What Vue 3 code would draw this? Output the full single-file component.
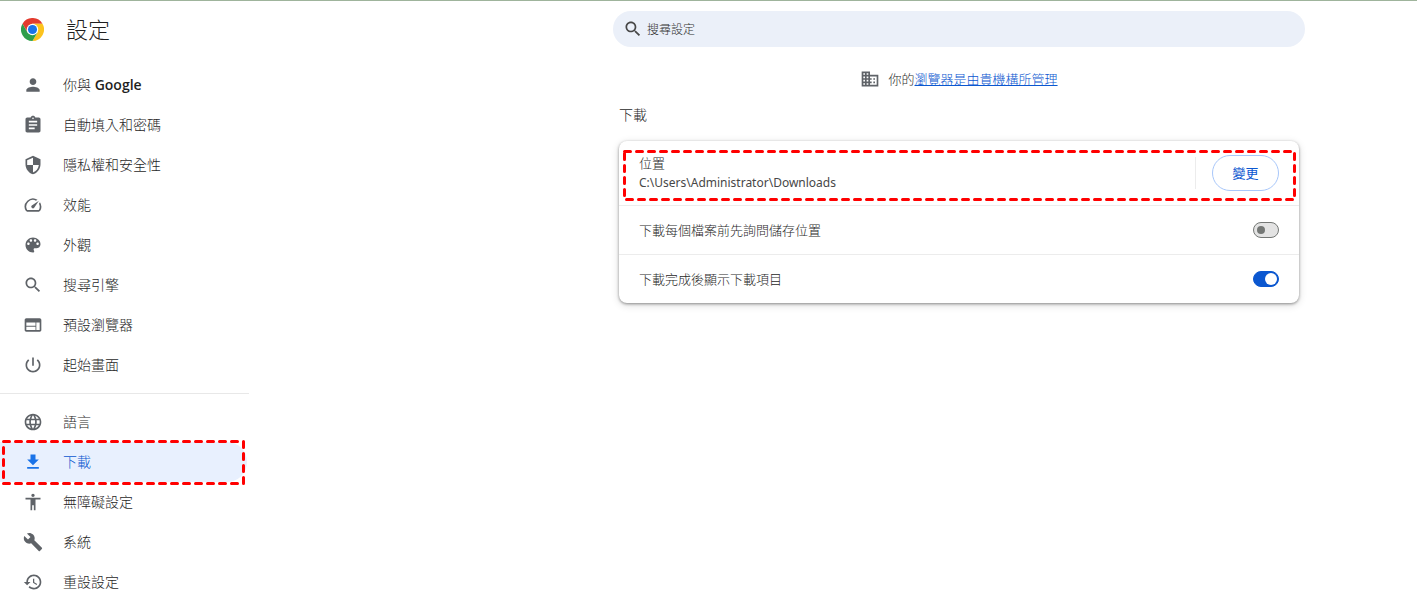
<script setup>
import { ref } from 'vue'

const searchPath = 'M15.5 14h-.79l-.28-.27C15.41 12.59 16 11.11 16 9.5 16 5.91 13.09 3 9.5 3S3 5.91 3 9.5 5.91 16 9.5 16c1.61 0 3.09-.59 4.23-1.57l.27.28v.79l5 4.99L20.49 19l-4.99-5zm-6 0C7.01 14 5 11.99 5 9.5S7.01 5 9.5 5 14 7.01 14 9.5 11.99 14 9.5 14z'
const domainPath = 'M12 7V3H2v18h20V7H12zM6 19H4v-2h2v2zm0-4H4v-2h2v2zm0-4H4V9h2v2zm0-4H4V5h2v2zm4 12H8v-2h2v2zm0-4H8v-2h2v2zm0-4H8V9h2v2zm0-4H8V5h2v2zm10 12h-8v-2h2v-2h-2v-2h2v-2h-2V9h8v10zm-2-8h-2v2h2v-2zm0 4h-2v2h2v-2z'

const groups = [
  [
    { id: 'people', label: '你與', strong: 'Google', icon: 'M12 12c2.21 0 4-1.79 4-4s-1.79-4-4-4-4 1.79-4 4 1.79 4 4 4zm0 2c-2.67 0-8 1.34-8 4v2h16v-2c0-2.66-5.33-4-8-4z' },
    { id: 'autofill', label: '自動填入和密碼', icon: 'M19 3h-4.18C14.4 1.84 13.3 1 12 1c-1.3 0-2.4.84-2.82 2H5c-1.1 0-2 .9-2 2v14c0 1.1.9 2 2 2h14c1.1 0 2-.9 2-2V5c0-1.1-.9-2-2-2zm-7 0c.55 0 1 .45 1 1s-.45 1-1 1-1-.45-1-1 .45-1 1-1zm2 14H7v-2h7v2zm3-4H7v-2h10v2zm0-4H7V7h10v2z' },
    { id: 'privacy', label: '隱私權和安全性', icon: 'M12 1L3 5v6c0 5.55 3.84 10.74 9 12 5.16-1.26 9-6.45 9-12V5l-9-4zm0 10.99h7c-.53 4.12-3.28 7.79-7 8.94V12H5V6.3l7-3.11v8.8z' },
    { id: 'performance', label: '效能', icon: 'M20.38 8.57l-1.23 1.85a8 8 0 0 1-.22 7.58H5.07A8 8 0 0 1 15.58 6.85l1.85-1.23A10 10 0 0 0 3.35 19a2 2 0 0 0 1.72 1h13.85a2 2 0 0 0 1.74-1 10 10 0 0 0-.27-10.44zm-9.79 6.84a2 2 0 0 0 2.83 0l5.66-8.49-8.49 5.66a2 2 0 0 0 0 2.83z' },
    { id: 'appearance', label: '外觀', icon: 'M12 3c-4.97 0-9 4.03-9 9s4.03 9 9 9c.83 0 1.5-.67 1.5-1.5 0-.39-.15-.74-.39-1.01-.23-.26-.38-.61-.38-.99 0-.83.67-1.5 1.5-1.5H16c2.76 0 5-2.24 5-5 0-4.42-4.03-8-9-8zm-5.5 9c-.83 0-1.5-.67-1.5-1.5S5.67 9 6.5 9 8 9.67 8 10.5 7.33 12 6.5 12zm3-4C8.67 8 8 7.33 8 6.5S8.67 5 9.5 5s1.5.67 1.5 1.5S10.33 8 9.5 8zm5 0c-.83 0-1.5-.67-1.5-1.5S13.67 5 14.5 5s1.5.67 1.5 1.5S15.33 8 14.5 8zm3 4c-.83 0-1.5-.67-1.5-1.5S16.67 9 17.5 9s1.5.67 1.5 1.5-.67 1.5-1.5 1.5z' },
    { id: 'search', label: '搜尋引擎', icon: searchPath },
    { id: 'default-browser', label: '預設瀏覽器', icon: 'M20 4H4c-1.1 0-1.99.9-1.99 2L2 18c0 1.1.9 2 2 2h16c1.1 0 2-.9 2-2V6c0-1.1-.9-2-2-2zm-5 14H4v-4h11v4zm0-5H4V9h11v4zm5 5h-4V9h4v9z' },
    { id: 'on-startup', label: '起始畫面', icon: 'M13 3h-2v10h2V3zm4.83 2.17l-1.42 1.42C17.99 7.86 19 9.81 19 12c0 3.87-3.13 7-7 7s-7-3.13-7-7c0-2.19 1.01-4.14 2.58-5.42L6.17 5.17C4.23 6.82 3 9.26 3 12c0 4.97 4.03 9 9 9s9-4.03 9-9c0-2.74-1.23-5.18-3.17-6.83z' }
  ],
  [
    { id: 'languages', label: '語言', icon: 'M11.99 2C6.47 2 2 6.48 2 12s4.47 10 9.99 10C17.52 22 22 17.52 22 12S17.52 2 11.99 2zm6.93 6h-2.95c-.32-1.25-.78-2.45-1.38-3.56 1.84.63 3.37 1.91 4.33 3.56zM12 4.04c.83 1.2 1.48 2.53 1.91 3.96h-3.82c.43-1.43 1.08-2.76 1.91-3.96zM4.26 14C4.1 13.36 4 12.69 4 12s.1-1.36.26-2h3.38c-.08.66-.14 1.32-.14 2 0 .68.06 1.34.14 2H4.26zm.82 2h2.95c.32 1.25.78 2.45 1.38 3.56-1.84-.63-3.37-1.9-4.33-3.56zm2.95-8H5.08c.96-1.66 2.49-2.93 4.33-3.56C8.81 5.55 8.35 6.75 8.03 8zM12 19.96c-.83-1.2-1.48-2.53-1.91-3.96h3.82c-.43 1.43-1.08 2.76-1.91 3.96zM14.34 14H9.66c-.09-.66-.16-1.32-.16-2 0-.68.07-1.35.16-2h4.68c.09.65.16 1.32.16 2 0 .68-.07 1.34-.16 2zm.25 5.56c.6-1.11 1.06-2.31 1.38-3.56h2.95c-.96 1.65-2.49 2.93-4.33 3.56zM16.36 14c.08-.66.14-1.32.14-2 0-.68-.06-1.34-.14-2h3.38c.16.64.26 1.31.26 2s-.1 1.36-.26 2h-3.38z' },
    { id: 'downloads', label: '下載', icon: 'M19 9h-4V3H9v6H5l7 7 7-7zM5 18v2h14v-2H5z' },
    { id: 'accessibility', label: '無障礙設定', icon: 'M12 2c1.1 0 2 .9 2 2s-.9 2-2 2-2-.9-2-2 .9-2 2-2zm9 7h-6v13h-2v-6h-2v6H9V9H3V7h18v2z' },
    { id: 'system', label: '系統', icon: 'M22.7 19l-9.1-9.1c.9-2.3.4-5-1.5-6.9-2-2-5-2.4-7.4-1.3L9 6 6 9 1.6 4.7C.4 7.1.9 10.1 2.9 12.1c1.9 1.9 4.6 2.4 6.9 1.5l9.1 9.1c.4.4 1 .4 1.4 0l2.3-2.3c.5-.4.5-1.1.1-1.4z' },
    { id: 'reset', label: '重設設定', icon: 'M13 3c-4.97 0-9 4.03-9 9H1l3.89 3.89.07.14L9 12H6c0-3.87 3.13-7 7-7s7 3.13 7 7-3.13 7-7 7c-1.93 0-3.68-.79-4.94-2.06l-1.42 1.42C8.27 19.99 10.51 21 13 21c4.97 0 9-4.03 9-9s-4.03-9-9-9zm-1 5v5l4.28 2.54.72-1.21-3.5-2.08V8H12z' }
  ]
]

const current = ref('downloads')
const query = ref('')
const askLocation = ref(false)
const showWhenDone = ref(true)
</script>

<template>
  <div class="page">
    <aside class="sidebar">
      <header class="brand">
        <svg class="logo" viewBox="0 0 48 48" aria-hidden="true">
          <path fill="#e33b2e" d="M3.2 12A24 24 0 0 1 44.8 12H24L13.6 30z" />
          <path fill="#fcc31e" d="M44.8 12A24 24 0 0 1 24 48L34.4 30 24 12z" />
          <path fill="#2f9e4b" d="M24 48A24 24 0 0 1 3.2 12L13.6 30H34.4z" />
          <circle cx="24" cy="24" r="12" fill="#fff" />
          <circle cx="24" cy="24" r="9.5" fill="#1a73e8" />
        </svg>
        <h1>設定</h1>
      </header>
      <nav aria-label="設定">
        <ul v-for="(group, i) in groups" :key="i" class="group">
          <li v-for="item in group" :key="item.id">
            <a
              :href="'#' + item.id"
              class="item"
              :class="{ selected: current === item.id }"
              :aria-current="current === item.id ? 'page' : undefined"
              @click.prevent="current = item.id"
            >
              <svg class="icon" viewBox="0 0 24 24" aria-hidden="true"><path :d="item.icon" /></svg>
              <span>{{ item.label }}<b v-if="item.strong">&nbsp;{{ item.strong }}</b></span>
              <svg v-if="item.id === 'downloads'" class="marker" aria-hidden="true"><rect x="1.5" y="1.5" /></svg>
            </a>
          </li>
        </ul>
      </nav>
    </aside>

    <main class="main">
      <label class="search">
        <svg class="icon" viewBox="0 0 24 24" aria-hidden="true"><path :d="searchPath" /></svg>
        <input v-model="query" type="search" placeholder="搜尋設定" aria-label="搜尋設定" />
      </label>

      <div class="content">
        <p class="managed">
          <svg class="icon" viewBox="0 0 24 24" aria-hidden="true"><path :d="domainPath" /></svg>
          <span>你的<a href="#management">瀏覽器是由貴機構所管理</a></span>
        </p>

        <h2>下載</h2>
        <section class="card">
          <div class="row location">
            <div class="text">
              <div>位置</div>
              <div class="path">C:\Users\Administrator\Downloads</div>
            </div>
            <div class="action"><button type="button">變更</button></div>
            <svg class="marker" aria-hidden="true"><rect x="1.5" y="1.5" /></svg>
          </div>
          <label class="row">
            <span class="text">下載每個檔案前先詢問儲存位置</span>
            <input v-model="askLocation" class="switch" type="checkbox" role="switch" />
          </label>
          <label class="row">
            <span class="text">下載完成後顯示下載項目</span>
            <input v-model="showWhenDone" class="switch" type="checkbox" role="switch" />
          </label>
        </section>
      </div>
    </main>
  </div>
</template>

<style>
body {
  margin: 0;
  background: #fff;
}
</style>

<style scoped>
.page {
  box-sizing: border-box;
  min-height: 100vh;
  display: grid;
  grid-template-columns: 249px 13fr minmax(0, 692px) 4fr;
  border-top: 1px solid #9fb49c;
  color: #1f1f1f;
  font: 300 13px/20px "Open Sans", "Noto Sans CJK TC", sans-serif;
}

.icon {
  width: 20px;
  height: 20px;
  flex: none;
  fill: #5f6368;
}

.brand {
  display: flex;
  align-items: center;
  gap: 22px;
  height: 56px;
  padding-left: 21px;
}

.logo {
  width: 23px;
  height: 23px;
}

h1 {
  margin: 0;
  font-size: 22px;
  line-height: 32px;
  font-weight: 300;
}

.group {
  list-style: none;
  margin: 0;
  padding: 8px 0;
}

.group + .group {
  border-top: 1px solid #e8e8e8;
}

.item {
  position: relative;
  display: flex;
  align-items: center;
  gap: 20px;
  height: 40px;
  margin-right: 2px;
  padding-left: 23px;
  border-radius: 0 20px 20px 0;
  color: #1f1f1f;
  font-size: 14px;
  text-decoration: none;
}

.item b {
  font-weight: 600;
}

.item.selected {
  background: #e8f0fe;
  color: #0b57d0;
}

.item.selected .icon {
  fill: #1a73e8;
}

.marker {
  position: absolute;
  pointer-events: none;
}

.marker rect {
  width: calc(100% - 3px);
  height: calc(100% - 3px);
  fill: none;
  stroke: #f00;
  stroke-width: 3px;
  stroke-dasharray: 6 6;
  stroke-linecap: round;
  stroke-linejoin: round;
}

.item .marker {
  left: 2px;
  top: -2px;
  width: calc(100% - 4px);
  height: 45px;
}

.main {
  grid-column: 3;
  padding-top: 10px;
}

.search {
  display: flex;
  align-items: center;
  gap: 4px;
  height: 36px;
  padding: 0 20px 0 10px;
  border-radius: 18px;
  background: #ebf0f9;
}

.search .icon {
  fill: #474747;
}

.search input {
  flex: 1;
  min-width: 0;
  padding: 2px 0 0;
  border: 0;
  outline: 0;
  background: none;
  color: #1f1f1f;
  font: inherit;
  font-size: 12px;
}

.search input::placeholder {
  color: #303030;
  opacity: 1;
}

.content {
  padding: 0 6px;
}

.managed {
  display: flex;
  justify-content: center;
  align-items: center;
  gap: 8px;
  margin: 22px 0 16px;
  color: #303030;
}

.managed a {
  color: #0b57d0;
}

h2 {
  margin: 0 0 16px;
  font-size: 14px;
  line-height: 20px;
  font-weight: 300;
}

.card {
  border-radius: 8px;
  box-shadow: 0 1px 3px rgba(0, 0, 0, 0.4), 0 2px 8px rgba(0, 0, 0, 0.14);
}

.row {
  position: relative;
  display: flex;
  align-items: center;
  min-height: 48px;
  padding: 0 20px;
}

.row + .row {
  border-top: 1px solid #ececec;
}

.location {
  min-height: 64px;
}

.text {
  flex: 1;
}

.path {
  color: #474747;
  font-family: "Noto Sans", sans-serif;
  font-size: 12px;
  font-weight: 400;
}

.action {
  display: flex;
  align-items: center;
  height: 32px;
  padding-left: 16px;
  border-left: 1px solid #ececec;
}

.action button {
  width: 67px;
  height: 36px;
  padding: 0;
  border: 1px solid #a8c7fa;
  border-radius: 18px;
  background: #fff;
  color: #0b57d0;
  font: inherit;
  font-weight: 400;
}

.location .marker {
  left: 4px;
  top: 9px;
  width: calc(100% - 7px);
  height: 51px;
}

.switch {
  appearance: none;
  display: flex;
  align-items: center;
  box-sizing: border-box;
  width: 26px;
  height: 16px;
  margin: 0;
  padding: 0 3px;
  border: 1px solid #747775;
  border-radius: 8px;
  background: #e3e3e3;
}

.switch::before {
  content: "";
  width: 8px;
  height: 8px;
  border-radius: 50%;
  background: #747775;
}

.switch:checked {
  justify-content: flex-end;
  padding: 0 1px;
  border-color: #0b57d0;
  background: #0b57d0;
}

.switch:checked::before {
  width: 12px;
  height: 12px;
  background: #fff;
}
</style>
